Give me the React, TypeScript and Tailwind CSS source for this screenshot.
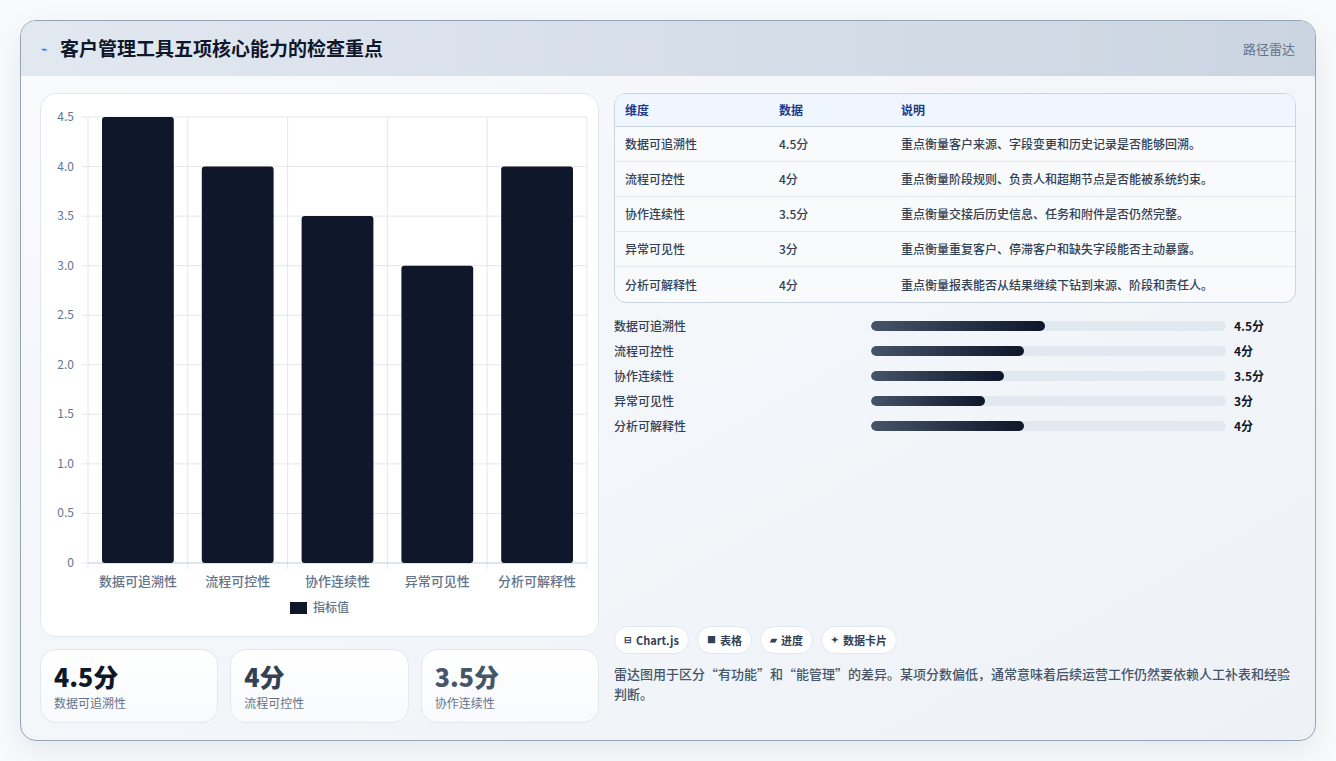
const rows = [
  { name: "数据可追溯性", v: 4.5, pct: 49, note: "重点衡量客户来源、字段变更和历史记录是否能够回溯。" },
  { name: "流程可控性", v: 4, pct: 43, note: "重点衡量阶段规则、负责人和超期节点是否能被系统约束。" },
  { name: "协作连续性", v: 3.5, pct: 37.5, note: "重点衡量交接后历史信息、任务和附件是否仍然完整。" },
  { name: "异常可见性", v: 3, pct: 32, note: "重点衡量重复客户、停滞客户和缺失字段能否主动暴露。" },
  { name: "分析可解释性", v: 4, pct: 43, note: "重点衡量报表能否从结果继续下钻到来源、阶段和责任人。" },
];

const font = { fontFamily: '"Noto Sans CJK SC", "Noto Sans", sans-serif' };

function BarChart() {
  // plot area in svg coords (card starts at x=40,y=93)
  const x0 = 47, x1 = 546, yTop = 23, yBot = 469;
  const unit = (yBot - yTop) / 4.5;
  const ticks = [0, 0.5, 1, 1.5, 2, 2.5, 3, 3.5, 4, 4.5];
  const cw = (x1 - x0) / 5;
  return (
    <svg width="558" height="543" className="block">
      {ticks.map((t) => {
        const y = yBot - t * unit;
        return (
          <g key={t}>
            <line x1={x0 - 6} x2={x1} y1={y} y2={y} stroke="#e5e7eb" />
            <text x={x0 - 14} y={y + 4} textAnchor="end" fontSize="12" fill="#64748b">
              {t === 0 ? "0" : t.toFixed(1)}
            </text>
          </g>
        );
      })}
      {[0, 1, 2, 3, 4, 5].map((i) => (
        <line key={i} x1={x0 + i * cw} x2={x0 + i * cw} y1={yTop} y2={yBot + 6} stroke="#e5e7eb" />
      ))}
      <line x1={x0} x2={x1} y1={yBot} y2={yBot} stroke="#cbd5e1" />
      {rows.map((r, i) => {
        const bx = x0 + i * cw + 14;
        const h = r.v * unit;
        return (
          <g key={r.name}>
            <rect x={bx} y={yBot - h} width={cw - 28} height={h} rx="3" fill="#0f172a" />
            <text x={x0 + i * cw + cw / 2} y={yBot + 23} textAnchor="middle" fontSize="13" fill="#64748b" fontWeight="500">
              {r.name}
            </text>
          </g>
        );
      })}
      <rect x="249" y="508" width="17" height="12" fill="#0f172a" />
      <text x="272" y="518" fontSize="12" fill="#64748b" fontWeight="500">指标值</text>
    </svg>
  );
}

export default function App() {
  return (
    <div className="w-[1336px] h-[761px] bg-[#f8fafc] pt-5 px-5" style={font}>
      <div className="w-[1296px] h-[721px] rounded-2xl border border-[#94a3b8] overflow-hidden bg-gradient-to-br from-[#f8fafc] to-[#eef2f7] shadow-[0_10px_30px_rgba(15,23,42,0.08)]">
        <div className="h-[55px] flex items-center justify-between px-5 bg-gradient-to-r from-[#e2e8f0] to-[#cbd5e1]">
          <div className="flex items-center gap-3">
            <span className="text-[#2563eb] text-[11px]">⌁</span>
            <h1 className="text-[19px] font-bold text-[#0f172a]">客户管理工具五项核心能力的检查重点</h1>
          </div>
          <span className="text-[13px] text-[#64748b]">路径雷达</span>
        </div>
        <div className="flex gap-[15px] px-[19px] pt-[17px]">
          <div className="w-[559px] flex flex-col gap-3">
            <div className="h-[544px] rounded-2xl bg-white border border-[#e2e8f0]">
              <BarChart />
            </div>
            <div className="grid grid-cols-3 gap-3">
              {rows.slice(0, 3).map((r, i) => (
                <div key={r.name} className="h-[74px] rounded-2xl bg-gradient-to-b from-white to-[#f8fafc] border border-[#e2e8f0] px-[13px] pt-[10px]">
                  <div className={`text-[25px] font-extrabold leading-8 ${i === 0 ? "text-[#0f172a]" : i === 1 ? "text-[#334155]" : "text-[#475569]"}`}>
                    {r.v}分
                  </div>
                  <div className="text-[12px] text-[#64748b] mt-0.5">{r.name}</div>
                </div>
              ))}
            </div>
          </div>
          <div className="flex-1 flex flex-col">
            <div className="rounded-xl border border-[#cbd5e1] overflow-hidden bg-[#f8fafc]">
              <div className="flex h-[33px] items-center bg-[#eff6ff] border-b border-[#cbd5e1] text-[12px] font-bold text-[#1e3a8a]">
                <div className="w-[164px] pl-[10px]">维度</div>
                <div className="w-[122px]">数据</div>
                <div>说明</div>
              </div>
              {rows.map((r, i) => (
                <div key={r.name} className={`flex h-[35px] items-center text-[12px] text-[#334155] font-medium ${i < 4 ? "border-b border-[#e2e8f0]" : ""}`}>
                  <div className="w-[164px] pl-[10px]">{r.name}</div>
                  <div className="w-[122px]">{r.v}分</div>
                  <div>{r.note}</div>
                </div>
              ))}
            </div>
            <div className="mt-[10px] flex flex-col">
              {rows.map((r) => (
                <div key={r.name} className="flex items-center h-[25px] text-[12px]">
                  <div className="w-[257px] text-[#334155] font-medium">{r.name}</div>
                  <div className="w-[355px] h-[10px] rounded-full bg-[#e2e8f0] overflow-hidden">
                    <div className="h-full rounded-full bg-gradient-to-r from-[#475569] to-[#0f172a]" style={{ width: `${r.pct}%` }} />
                  </div>
                  <div className="ml-2 font-bold text-[#0f172a]">{r.v}分</div>
                </div>
              ))}
            </div>
            <div className="mt-auto pb-[19px]">
              <div className="flex gap-2">
                {[["⊟", "Chart.js"], ["■", "表格"], ["▰", "进度"], ["✦", "数据卡片"]].map(([ic, t]) => (
                  <span key={t} className="h-[28px] px-[9px] rounded-full bg-white border border-[#e2e8f0] flex items-center gap-1 text-[11px] font-bold text-[#334155]">
                    <span className="text-[9px]">{ic}</span>
                    {t}
                  </span>
                ))}
              </div>
              <p className="mt-[10px] text-[13px] leading-[20px] font-medium text-[#475569]">
                雷达图用于区分“有功能”和“能管理”的差异。某项分数偏低，通常意味着后续运营工作仍然要依赖人工补表和经验判断。
              </p>
            </div>
          </div>
        </div>
      </div>
    </div>
  );
}
